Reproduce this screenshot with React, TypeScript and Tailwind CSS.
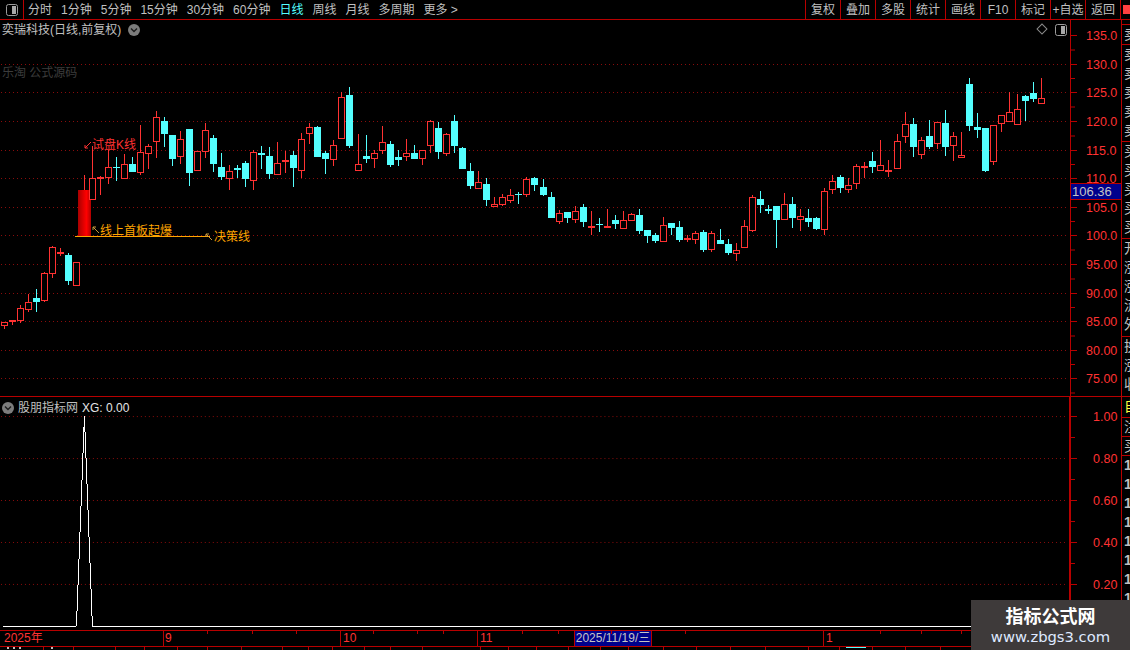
import React from 'react';

const RED = '#ff3232';
const CYAN = '#54ffff';
const AXIS = '#b80000';
const GRID = '#8a0c0c';

// one row per bar: r/c, body top, body bottom, high, low (screen px)
type Bar = [string, number, number, number, number];

const bars: Bar[] = [
  ['r', 322, 326, 322, 329], ['r', 320, 322, 320, 325], ['r', 308, 321, 305, 323], ['r', 302, 310, 294, 312],
  ['c', 298, 302, 289, 312], ['r', 273, 301, 272, 302], ['r', 247, 274, 246, 278], ['r', 252, 254, 248, 256],
  ['c', 255, 281, 253, 285], ['r', 262, 286, 262, 286], ['x', 190, 236, 175, 236], ['r', 178, 200, 146, 200],
  ['r', 177, 178, 176, 195], ['r', 167, 178, 150, 184], ['c', 167, 168, 157, 181], ['r', 164, 179, 154, 179],
  ['c', 164, 172, 157, 172], ['r', 152, 173, 125, 175], ['r', 146, 154, 144, 169], ['r', 117, 142, 111, 158],
  ['c', 121, 134, 117, 147], ['c', 135, 159, 135, 166], ['r', 139, 157, 131, 164], ['c', 129, 173, 129, 186],
  ['r', 151, 171, 151, 171], ['r', 130, 152, 123, 158], ['c', 138, 164, 135, 172], ['c', 167, 177, 153, 180],
  ['r', 171, 179, 165, 190], ['c', 168, 170, 165, 178], ['c', 163, 179, 161, 187], ['r', 152, 181, 150, 190],
  ['c', 153, 155, 146, 169], ['c', 156, 174, 147, 179], ['r', 163, 175, 142, 175], ['r', 160, 161, 151, 173],
  ['c', 155, 168, 151, 187], ['r', 139, 171, 133, 178], ['r', 127, 134, 123, 144], ['c', 127, 157, 126, 157],
  ['c', 153, 159, 151, 174], ['r', 145, 160, 140, 166], ['r', 97, 139, 92, 139], ['c', 95, 146, 87, 148],
  ['r', 164, 171, 134, 171], ['c', 156, 159, 135, 163], ['r', 153, 159, 150, 168], ['r', 142, 151, 126, 154],
  ['c', 144, 165, 141, 167], ['c', 157, 160, 150, 166], ['r', 153, 157, 139, 161], ['c', 153, 159, 145, 159],
  ['r', 150, 159, 150, 165], ['r', 121, 146, 120, 153], ['c', 128, 152, 122, 159], ['r', 134, 154, 133, 156],
  ['c', 121, 146, 115, 153], ['c', 148, 169, 147, 169], ['c', 171, 186, 163, 189], ['r', 182, 189, 171, 189],
  ['c', 184, 200, 178, 206], ['r', 204, 207, 197, 207], ['r', 197, 205, 194, 206], ['r', 195, 201, 189, 203],
  ['c', 194, 195, 192, 204], ['r', 179, 195, 177, 197], ['c', 178, 185, 177, 191], ['c', 187, 195, 179, 196],
  ['c', 197, 218, 192, 218], ['r', 213, 222, 210, 224], ['c', 212, 218, 212, 223], ['r', 211, 220, 206, 223],
  ['c', 207, 222, 204, 227], ['r', 226, 228, 211, 235], ['c', 224, 225, 218, 232], ['r', 226, 227, 209, 227],
  ['c', 220, 224, 215, 229], ['r', 220, 229, 211, 229], ['r', 214, 221, 213, 221], ['c', 215, 231, 209, 234],
  ['c', 230, 236, 230, 243], ['c', 235, 241, 233, 243], ['r', 225, 242, 217, 242], ['c', 223, 228, 223, 235],
  ['c', 227, 240, 221, 242], ['r', 238, 240, 235, 242], ['r', 233, 240, 231, 244], ['c', 232, 250, 230, 252],
  ['r', 233, 250, 231, 252], ['c', 240, 244, 229, 244], ['c', 244, 253, 239, 255], ['r', 250, 254, 243, 261],
  ['r', 226, 248, 220, 248], ['r', 197, 231, 195, 232], ['c', 199, 205, 191, 213], ['c', 209, 211, 205, 214],
  ['c', 206, 220, 206, 248], ['r', 204, 220, 193, 220], ['c', 204, 218, 197, 228], ['r', 216, 220, 209, 231],
  ['c', 218, 222, 209, 227], ['c', 218, 229, 217, 230], ['r', 191, 230, 188, 235], ['r', 181, 190, 175, 194],
  ['c', 177, 188, 175, 193], ['r', 185, 190, 178, 193], ['r', 166, 184, 164, 189], ['r', 166, 167, 162, 178],
  ['c', 161, 167, 152, 173], ['r', 165, 171, 140, 171], ['r', 170, 171, 160, 177], ['r', 141, 169, 134, 169],
  ['r', 124, 137, 112, 143], ['c', 124, 147, 118, 157], ['r', 140, 155, 137, 159], ['c', 136, 147, 120, 149],
  ['r', 122, 144, 122, 149], ['c', 123, 147, 110, 156], ['r', 136, 146, 132, 161], ['r', 155, 158, 132, 158],
  ['c', 84, 126, 78, 131], ['c', 127, 130, 113, 138], ['c', 128, 171, 128, 172], ['r', 125, 162, 125, 165],
  ['r', 115, 124, 115, 132], ['r', 112, 122, 92, 122], ['r', 109, 125, 94, 125], ['c', 96, 101, 95, 121],
  ['c', 93, 99, 82, 102], ['r', 98, 104, 78, 104],
];

// the bars drift by one px every so often
const barX = (i: number) =>
  4 + i * 8 + [23, 44, 67, 89, 111].filter((n) => i >= n).length;

const mainTicks = [
  { y: 35, label: '135.0' }, { y: 64, label: '130.0' }, { y: 92, label: '125.0' }, { y: 121, label: '120.0' },
  { y: 150, label: '115.0' }, { y: 178, label: '110.0' }, { y: 207, label: '105.0' }, { y: 235, label: '100.0' },
  { y: 264, label: '95.00' }, { y: 293, label: '90.00' }, { y: 321, label: '85.00' }, { y: 350, label: '80.00' },
  { y: 378, label: '75.00' },
];

const subTicks = [
  { y: 416, label: '1.00' }, { y: 458, label: '0.80' }, { y: 500, label: '0.60' },
  { y: 542, label: '0.40' }, { y: 584, label: '0.20' },
];

const leftTools = ['分时', '1分钟', '5分钟', '15分钟', '30分钟', '60分钟', '日线', '周线', '月线', '多周期'];
const rightTools = ['复权', '叠加', '多股', '统计', '画线', 'F10', '标记', '+自选', '返回'];
const stripBlocks = [
  { text: '卖', h: 'h-[20px]' },
  { text: '卖卖卖卖卖', h: 'h-[97px]' },
  { text: '买买买买买', h: 'h-[97px]' },
  { text: '开涨涨流外', h: 'h-[98px]' },
  { text: '换涨收', h: 'h-[60px]' },
];

const PanelIcon = () => (
  <svg width="12" height="12" viewBox="0 0 12 12">
    <rect x="0.5" y="0.5" width="11" height="11" rx="2" fill="none" stroke="#9c9c9c" />
    <rect x="6" y="2" width="4" height="8" fill="#a8a8a8" />
  </svg>
);

const ChevronBadge = () => (
  <svg width="12" height="12" viewBox="0 0 12 12">
    <circle cx="6" cy="6" r="6" fill="#7c7c7c" />
    <path d="M3 4.6 L6 7.6 L9 4.6" fill="none" stroke="#1c1c1c" strokeWidth="1.4" />
  </svg>
);

const Candles = () => (
  <>
    {bars.map(([kind, top, bot, high, low], i) => {
      const x = barX(i);
      const color = kind === 'c' ? CYAN : RED;
      return (
        <g key={i} shapeRendering="crispEdges">
          {high < top && <line x1={x + 0.5} x2={x + 0.5} y1={high} y2={top} stroke={color} />}
          {low > bot && <line x1={x + 0.5} x2={x + 0.5} y1={bot} y2={low} stroke={color} />}
          {kind === 'c' && <rect x={x - 3} y={top} width={7} height={Math.max(bot - top, 1)} fill={CYAN} />}
          {kind === 'r' && (
            <rect x={x - 2.5} y={top + 0.5} width={6} height={Math.max(bot - top - 1, 1)} fill="#000" stroke={RED} />
          )}
          {kind === 'x' && <rect x={x - 6} y={top} width={13} height={bot - top} fill="url(#limitUp)" />}
        </g>
      );
    })}
  </>
);

const MainPlot = () => (
  <svg width="1070" height="376" viewBox="0 20 1070 376" className="block">
    <defs>
      <linearGradient id="limitUp" x1="0" x2="1" y1="0" y2="0">
        <stop offset="0" stopColor="#a80000" />
        <stop offset="0.65" stopColor="#ff0000" />
        <stop offset="1" stopColor="#b00000" />
      </linearGradient>
    </defs>
    {mainTicks.slice(1).map((t) => (
      <line key={t.y} x1="1" x2="1066" y1={t.y + 0.5} y2={t.y + 0.5} stroke={GRID} strokeDasharray="1 3" />
    ))}
    <Candles />
    <line x1="75" x2="210" y1="236.5" y2="236.5" stroke="#ffa500" shapeRendering="crispEdges" />
    <path d="M85 148 L91 142 M85 148 v-3 M85 148 h3" fill="none" stroke={RED} />
    <text x="92" y="149" fontSize="12" fill={RED}>试盘K线</text>
    <path d="M99 233 L93 227 M93 227 v3 M93 227 h3" fill="none" stroke="#c89a3c" />
    <text x="100" y="235" fontSize="12" fill="#ffa500">线上首板起爆</text>
    <path d="M212 240 L206 234 M206 234 v3 M206 234 h3" fill="none" stroke="#c89a3c" />
    <text x="214" y="241" fontSize="12" fill="#ffa500">决策线</text>
  </svg>
);

const SubPlot = () => (
  <svg width="1070" height="233" viewBox="0 397 1070 233" className="block">
    {subTicks.map((t) => (
      <line key={t.y} x1="1" x2="1066" y1={t.y + 0.5} y2={t.y + 0.5} stroke={GRID} strokeDasharray="1 3" />
    ))}
    <path
      d="M3 626.5 H76.5 L84.5 416 L92.5 626.5 H1070"
      fill="none"
      stroke="#fff"
      strokeWidth="1"
      shapeRendering="crispEdges"
    />
  </svg>
);

const Axis = ({ ticks, top, height, left }: { ticks: { y: number; label: string }[]; top: number; height: number; left: number }) => (
  <svg width="50" height={height} viewBox={`1071 ${top} 50 ${height}`} className="block">
    {ticks.map((t, i) => {
      const next = ticks[i + 1];
      const gap = next ? next.y - t.y : ticks[1].y - ticks[0].y;
      return (
        <g key={t.label}>
          <line x1="1071" x2="1077" y1={t.y + 0.5} y2={t.y + 0.5} stroke={AXIS} />
          <line x1="1071" x2="1075" y1={t.y + gap / 2 + 0.5} y2={t.y + gap / 2 + 0.5} stroke={AXIS} />
          <text x={left} y={t.y + 5} fontSize="12.5" fill={RED}>{t.label}</text>
        </g>
      );
    })}
  </svg>
);

const Strip = () => (
  <div className="w-[9px] border-l border-[#b80000] overflow-hidden text-[14px] leading-[19px] text-[#c0c0c0] flex flex-col">
    <div className="h-[5px] border-b border-[#b80000]" />
    {stripBlocks.map((b, i) => (
      <div key={i} className={`${b.h} pl-[2px] border-b border-[#b80000] overflow-hidden`}>
        {b.text.split('').map((c, j) => (
          <div key={j} className="w-[16px]">{c}</div>
        ))}
      </div>
    ))}
    <div className="h-[21px] pl-[2px] border-b border-[#b80000] text-[#ffff40]">自</div>
    <div className="h-[19px] pl-[2px] border-b border-[#b80000]">注</div>
    <div className="h-[19px] pl-[2px] border-b border-[#b80000]">买</div>
    {[0, 1, 2, 3, 4, 5, 6, 7, 8, 9].map((n) => (
      <div key={n} className="h-[19px] pl-[2px] font-bold">1</div>
    ))}
  </div>
);

const XAxis = () => (
  <div className="relative h-[17px] flex border-y border-[#b80000] text-[12px] leading-[15px] text-[#ff3232]">
    <div className="w-[163px] pl-[4px]">2025年</div>
    <div className="w-[177px] pl-[1px] border-l border-[#b80000]">9</div>
    <div className="w-[137px] pl-[2px] border-l border-[#b80000]">10</div>
    <div className="w-[97px] pl-[2px] border-l border-[#b80000]">11</div>
    <div className="w-[78px] bg-[#00008c] text-[#c4c4c4] text-center border-x border-[#b80000]">2025/11/19/三</div>
    <div className="w-[171px]" />
    <div className="pl-[2px] border-l border-[#b80000]">1</div>
    <svg className="absolute left-0 top-0" width="971" height="3">
      {[207, 252, 296, 373, 417, 443, 522, 558, 611, 685, 880, 921, 961].map((x) => (
        <line key={x} x1={x + 0.5} x2={x + 0.5} y1="0" y2="3" stroke={AXIS} />
      ))}
    </svg>
  </div>
);

const CutOffRow = () => (
  <svg width="971" height="3" className="block">
    {[43, 73, 115, 144, 177, 207, 241, 282, 308, 332, 364, 390, 422, 480, 508, 536, 568, 600, 628, 663, 696, 730, 765, 808, 839, 872, 905, 940].map((x) => (
      <line key={x} x1={x + 0.5} x2={x + 0.5} y1="0" y2="3" stroke={AXIS} />
    ))}
    <rect x="7" y="0" width="2" height="2" fill="#c0c0c0" />
    <rect x="13" y="0" width="2" height="2" fill="#c0c0c0" />
    <rect x="19" y="0" width="2" height="2" fill="#c0c0c0" />
    <rect x="51" y="0" width="2" height="2" fill="#c0c0c0" />
    <rect x="846" y="0" width="20" height="1" fill="#54ffff" />
  </svg>
);

export default function App() {
  return (
    <div className="relative w-[1130px] h-[650px] bg-black overflow-hidden flex flex-col text-[12px] text-[#c0c0c0] font-['Liberation_Sans','Noto_Sans_CJK_SC',sans-serif]">
      {/* toolbar */}
      <div className="h-[20px] flex items-center border-b border-[#b80000] shrink-0">
        <div className="w-[24px] h-full flex items-center justify-center border-r border-[#b80000]">
          <PanelIcon />
        </div>
        <div className="flex items-center gap-[9px] pl-[4px]">
          {leftTools.map((t) => (
            <span key={t} className={t === '日线' ? 'text-[#54ffff]' : ''}>{t}</span>
          ))}
          <span>更多 &gt;</span>
        </div>
        <div className="ml-auto flex h-full">
          {rightTools.map((t) => (
            <div key={t} className="w-[35px] flex items-center justify-center border-l border-[#b80000]">{t}</div>
          ))}
          <div className="w-[10px] h-full border-l border-[#b80000] flex items-center justify-end">
            <div className="w-[7px] h-[9px] bg-[#ff4040]" />
          </div>
        </div>
      </div>

      <div className="flex flex-1 min-h-0">
        <div className="w-[1121px] flex flex-col">
          {/* price pane */}
          <div className="relative flex h-[377px] border-b border-[#b80000]">
            <MainPlot />
            <div className="border-l border-[#b80000]">
              <Axis ticks={mainTicks} top={20} height={376} left={1086} />
            </div>
            <div className="absolute left-[2px] top-[1px] flex items-center gap-[7px]">
              <span>奕瑞科技(日线,前复权)</span>
              <ChevronBadge />
            </div>
            <div className="absolute left-[2px] top-[44px] text-[#3c3c3c]">乐淘 公式源码</div>
            <div className="absolute left-[1038px] top-[5px] w-[8px] h-[8px] rotate-45 border border-[#8a8a8a]" />
            <div className="absolute left-[1055px] top-[4px]"><PanelIcon /></div>
            <div className="absolute left-[1071px] top-[163px] w-[50px] h-[17px] bg-[#00008c] border-y border-[#b80000] text-[13px] leading-[15px] pl-[1px] text-[#c4c4c4]">
              106.36
            </div>
          </div>

          {/* indicator pane */}
          <div className="relative flex h-[233px]">
            <SubPlot />
            <div className="border-l-2 border-[#b80000]">
              <Axis ticks={subTicks} top={397} height={233} left={1093} />
            </div>
            <div className="absolute left-[2px] top-[2px] flex items-center gap-[4px]">
              <ChevronBadge />
              <span>股朋指标网</span>
              <span className="text-[#e4e4e4]">XG: 0.00</span>
            </div>
          </div>

          <XAxis />
          <CutOffRow />
        </div>
        <Strip />
      </div>

      {/* site stamp over the corner */}
      <div className="absolute right-0 bottom-0 w-[159px] h-[50px] bg-[#3e3a3a] flex flex-col items-center pt-[5px]">
        <div className="text-[18px] leading-[24px] font-bold text-white">指标公式网</div>
        <div className="text-[14.75px] leading-[15px] text-[#dfe9ff] font-['DejaVu_Sans',sans-serif]">www.zbgs3.com</div>
      </div>
    </div>
  );
}
